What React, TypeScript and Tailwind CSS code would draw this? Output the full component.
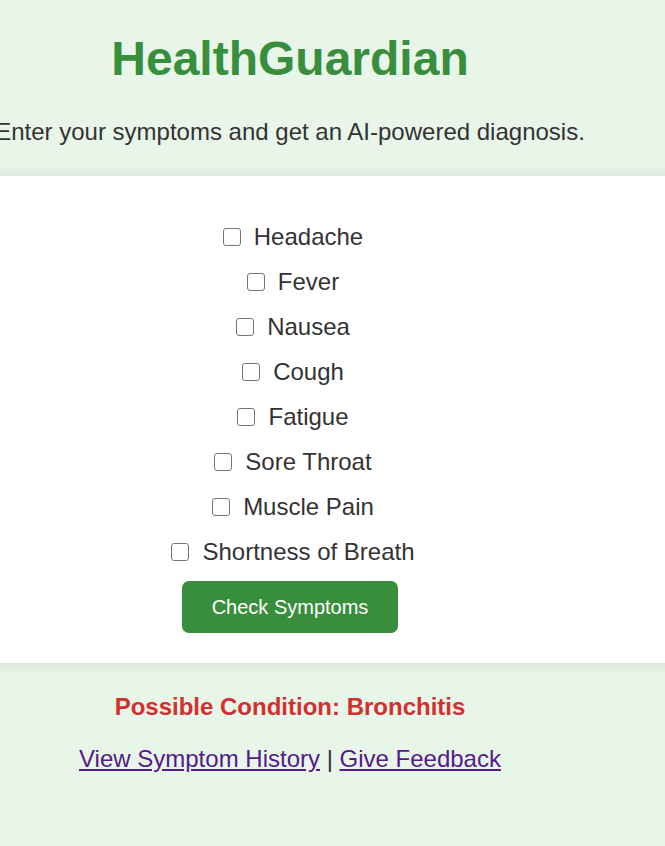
const symptoms = [
  'Headache',
  'Fever',
  'Nausea',
  'Cough',
  'Fatigue',
  'Sore Throat',
  'Muscle Pain',
  'Shortness of Breath',
];

export default function App() {
  return (
    <div className="min-h-[846px] overflow-hidden bg-[#e8f5e9] font-['Liberation_Sans',Arial,sans-serif] text-[#333]">
      <div className="w-[800px] -ml-[110px] text-center">
        {/* Header */}
        <div className="pt-[32px] pb-[31px]">
          <h1 className="text-[48px] leading-[54px] font-bold text-[#388e3c]">HealthGuardian</h1>
          <p className="mt-[32px] text-[24px] leading-[27px]">Enter your symptoms and get an AI-powered diagnosis.</p>
        </div>

        {/* Symptom form */}
        <div className="bg-white shadow-[0_0_15px_rgba(0,0,0,0.1)] pt-[38px] pb-[30px] flex flex-col items-center">
          {symptoms.map(s => (
            <label key={s} className="h-[45px] flex items-center justify-center gap-[13px] text-[24px] cursor-pointer">
              <input
                type="checkbox"
                className="appearance-none ml-[6px] w-[18px] h-[18px] border-[1.5px] border-[#767676] rounded-[3px] bg-white checked:bg-[#388e3c]"
              />
              <span>{s}</span>
            </label>
          ))}
          <button className="mt-[7px] bg-[#388e3c] text-white text-[20px] leading-[22px] px-[30px] py-[15px] rounded-[7px]">
            Check Symptoms
          </button>
        </div>

        {/* Result */}
        <p className="mt-[30px] text-[24px] leading-[28px] font-bold text-[#d32f2f]">Possible Condition: Bronchitis</p>
        <p className="mt-[24px] text-[24px] leading-[28px]">
          <a href="#" className="underline text-[#551a8b]">View Symptom History</a>
          {' | '}
          <a href="#" className="underline text-[#551a8b]">Give Feedback</a>
        </p>
      </div>
    </div>
  );
}
